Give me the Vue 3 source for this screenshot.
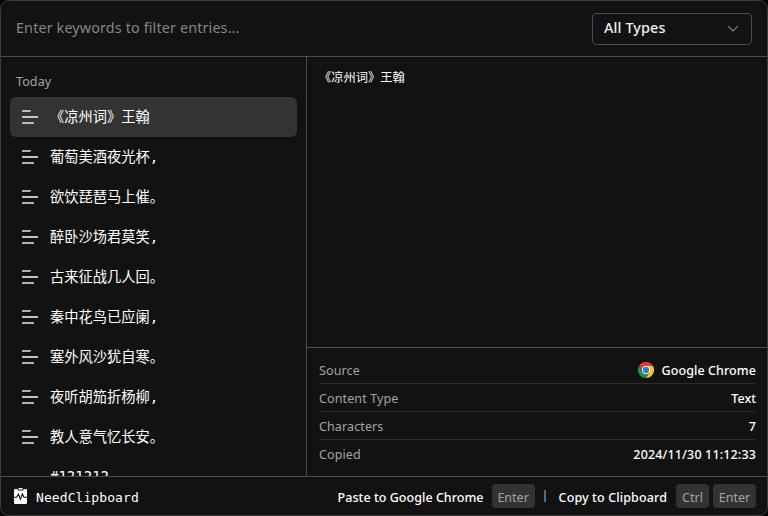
<script setup>
const entries = [
  '《凉州词》王翰', '葡萄美酒夜光杯,', '欲饮琵琶马上催。', '醉卧沙场君莫笑,', '古来征战几人回。',
  '秦中花鸟已应阑,', '塞外风沙犹自寒。', '夜听胡笳折杨柳,', '教人意气忆长安。'
]
</script>

<template>
  <div class="window">
    <header class="top">
      <div class="search"><span class="t-search">Enter keywords to filter entries...</span></div>
      <div class="select">
        <span class="t-types">All Types</span>
        <svg width="12" height="8" viewBox="0 0 12 8"><path d="M1.2 1.2 6 6l4.8-4.8" fill="none" stroke="#85868a" stroke-width="1.2" /></svg>
      </div>
    </header>
    <main class="main">
      <section class="list">
        <div class="group"><span class="t-today">Today</span></div>
        <div v-for="(e, i) in entries" :key="e" class="item" :class="{ active: i === 0 }">
          <svg class="lines" width="16" height="14" viewBox="0 0 16 14">
            <path d="M0 1h8.7M0 13h12" stroke="#e8e8e8" stroke-width="1.5" />
            <path d="M0 7h16" stroke="#c4c4c4" stroke-width="2" />
          </svg>
          <span class="title">{{ e }}</span>
        </div>
        <div class="item"><span class="lines blank"></span><span class="title mono">#121212</span></div>
      </section>
      <section class="detail">
        <div class="preview">《凉州词》王翰</div>
        <div class="info">
          <div class="row">
            <span class="label t-source">Source</span>
            <span class="value">
              <svg width="16" height="16" viewBox="0 0 48 48">
                <path d="M24 12H44.8A24 24 0 0 0 3.2 12L13.6 30Z" fill="#e33b2e" />
                <path d="M34.4 30 24 48A24 24 0 0 0 44.8 12H24Z" fill="#fcc31e" />
                <path d="M13.6 30 3.2 12A24 24 0 0 0 24 48L34.4 30Z" fill="#229342" />
                <circle cx="24" cy="24" r="12" fill="#fff" />
                <circle cx="24" cy="24" r="9.5" fill="#3478ed" />
              </svg>
              <span class="t-chrome">Google Chrome</span>
            </span>
          </div>
          <div class="row"><span class="label t-ctype">Content Type</span><span class="value t-text">Text</span></div>
          <div class="row"><span class="label t-chars">Characters</span><span class="value t-text">7</span></div>
          <div class="row"><span class="label t-copied">Copied</span><span class="value t-date">2024/11/30 11:12:33</span></div>
        </div>
      </section>
    </main>
    <footer class="foot">
      <svg class="logo" width="13" height="16" viewBox="0 0 13 16">
        <path d="M1.3 1H3.6v1.4h5.8V1h2.3Q13 1 13 2.3v12.4q0 1.3-1.3 1.3H1.3Q0 16 0 14.7V2.3Q0 1 1.3 1Z" fill="#fff" />
        <rect x="4.4" y="0" width="4.2" height="1.6" rx=".5" fill="#fff" />
        <path d="M0 9.3h2.6l1.8-3 2 5 2-5.3 1.5 3.3H13" fill="none" stroke="#121212" stroke-width="1.1" />
      </svg>
      <span class="app">NeedClipboard</span>
      <div class="actions">
        <span class="t-paste">Paste to Google Chrome</span>
        <kbd class="k1"><span>Enter</span></kbd>
        <i class="sep"></i>
        <span class="t-copy">Copy to Clipboard</span>
        <kbd class="k2"><span>Ctrl</span></kbd>
        <kbd class="k3"><span>Enter</span></kbd>
      </div>
    </footer>
  </div>
</template>

<style>
body { background: #060606; overflow: hidden; }
</style>
<style scoped>
* { box-sizing: border-box; }
.window { width: 768px; height: 516px; display: flex; flex-direction: column; background: #121212; border: 1px solid #3b3b3b; border-radius: 9px; overflow: hidden; color: #fff; font-family: "Noto Sans", "Noto Sans CJK SC", sans-serif; font-size: 12.5px; white-space: nowrap; }
.top { height: 56px; flex: none; display: flex; align-items: center; justify-content: space-between; padding: 0 15px; border-bottom: 1px solid #4c4c4c; }
.search { color: #85868a; font-size: 14.4px; letter-spacing: .12px; padding-bottom: 2px; }
.select { width: 160px; height: 32px; border: 1px solid #4c4c4c; border-radius: 4px; display: flex; align-items: center; justify-content: space-between; padding: 0 12px 0 11px; font-size: 14.4px; font-weight: 500; color: #eee; }
.t-types { letter-spacing: .12px; padding-bottom: 2px; }
.main { flex: 1; min-height: 0; display: flex; }
.list { width: 306px; flex: none; border-right: 1px solid #4c4c4c; padding: 8px 9px 0; overflow: hidden; }
.group { height: 32px; line-height: 34px; padding-left: 6px; color: #a3a3a3; letter-spacing: .1px; }
.item { height: 40px; display: flex; align-items: center; padding-left: 12px; border-radius: 6px; }
.item.active { background: #333; }
.lines { width: 16px; flex: none; margin-right: 12px; }
.title { font-family: "DejaVu Sans Mono", "Noto Sans CJK SC", sans-serif; font-size: 14.25px; line-height: 20px; padding-bottom: 1px; }
.mono { font-size: 14px; padding-bottom: 2px; }
.detail { flex: 1; min-width: 0; display: flex; flex-direction: column; }
.preview { flex: 1; padding: 11px 12px; font-family: "Noto Sans CJK SC", sans-serif; font-size: 12.25px; line-height: 18px; }
.info { height: 129px; flex: none; border-top: 1px solid #4c4c4c; padding: 8px 11px 0 12px; }
.row { height: 28px; display: flex; align-items: center; justify-content: space-between; border-bottom: 1px solid #2c2c2c; }
.row:last-child { border-bottom-color: transparent; }
.label { color: #a3a3a3; letter-spacing: .12px; }
.row > .label, .t-chrome, .row > .t-text, .row > .t-date { padding-top: 1px; }
.value { display: flex; align-items: center; gap: 8px; font-weight: 500; }
.t-chrome { letter-spacing: .08px; }
.t-date { letter-spacing: .15px; }
.foot { height: 39px; flex: none; border-top: 1px solid #4c4c4c; display: flex; align-items: center; padding: 0 11px 0 12.5px; }
.app { margin-left: 9.5px; font-family: "DejaVu Sans Mono", monospace; font-size: 13px; letter-spacing: .08px; padding-top: 2px; }
.actions { margin-left: auto; display: flex; align-items: center; }
.t-paste, .t-copy { font-weight: 500; padding-top: 2px; letter-spacing: .04px; }
.t-copy { letter-spacing: .12px; }
kbd { height: 24px; border-radius: 4px; background: #333; color: #a3a3a3; font: inherit; display: flex; align-items: center; justify-content: center; }
kbd span { padding-top: 2px; }
.k1 { width: 43px; margin-left: 8px; }
.sep { width: 2px; height: 12px; background: #47708e; margin: 0 13px 0 9px; }
.k2 { width: 33px; margin-left: 9px; }
.k3 { width: 43px; margin-left: 4px; }
</style>
